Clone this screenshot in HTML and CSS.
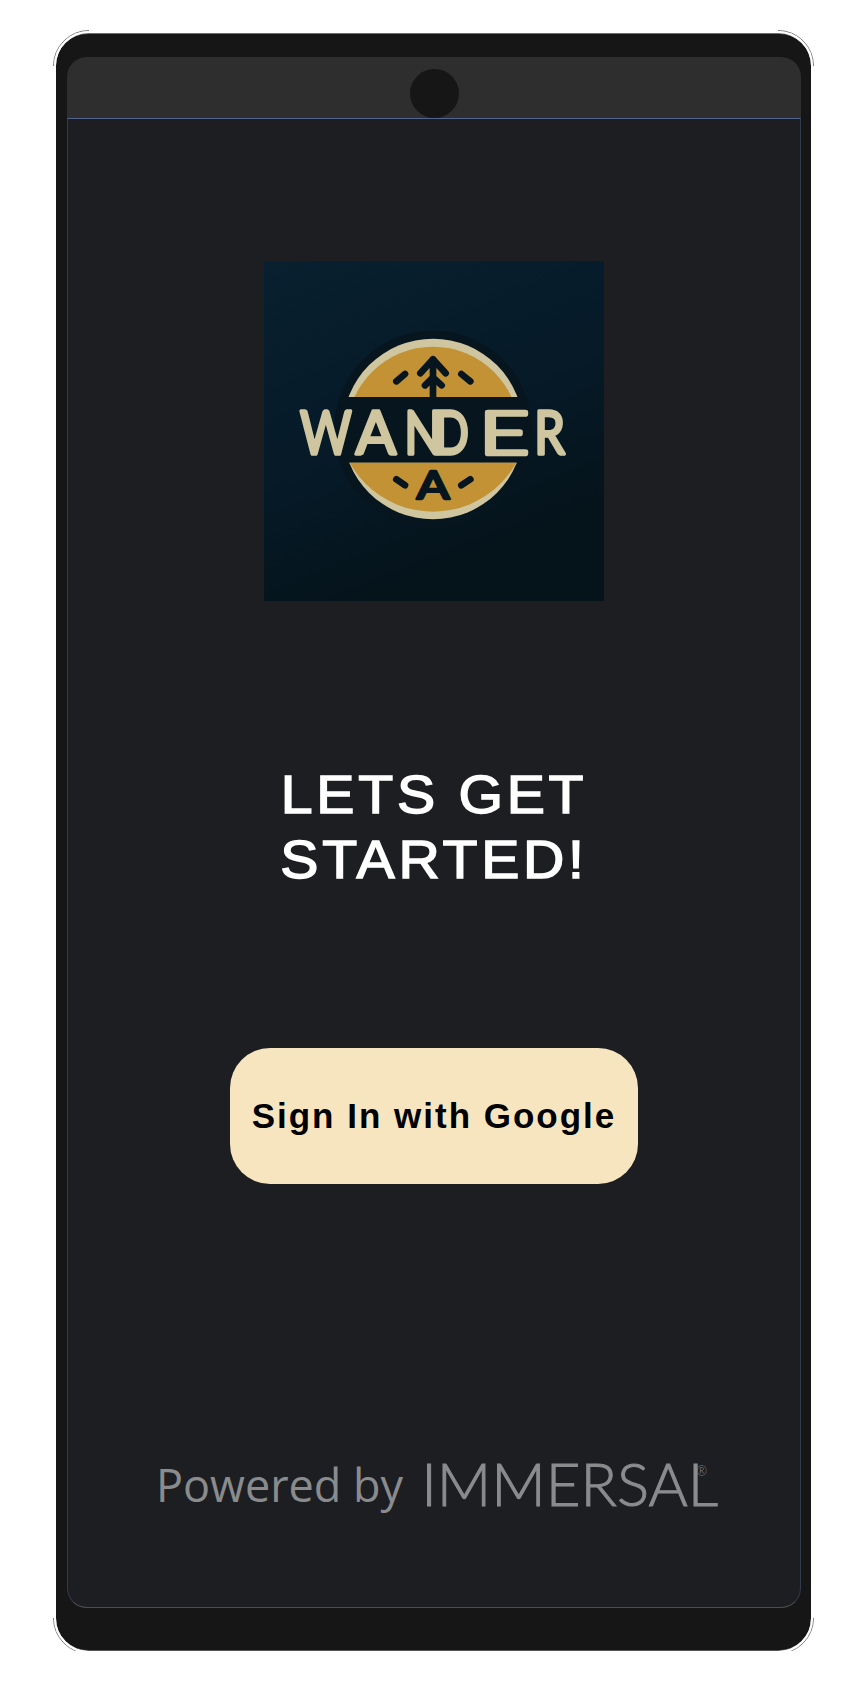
FILE: index.html
```html
<!DOCTYPE html>
<html lang="en">
<head>
  <meta charset="UTF-8" />
  <meta name="viewport" content="width=device-width, initial-scale=1.0"/>
  <title>Wander</title>
  <link rel="stylesheet" href="styles.css">
</head>
<body>

<div class="phone">
  <svg class="corner corner-tl" viewBox="0 0 36 36"><path class="arc-edge" d="M.5 36A35.500 35.500 0 0 1 36 .5"/><path class="arc-white" d="M2 36A34 34 0 0 1 36 2"/></svg>
  <svg class="corner corner-tr" viewBox="0 0 36 36"><path class="arc-edge" d="M.5 36A35.500 35.500 0 0 1 36 .5"/><path class="arc-white" d="M2 36A34 34 0 0 1 36 2"/></svg>
  <svg class="corner corner-bl" viewBox="0 0 36 36"><path class="arc-edge" d="M.5 36A35.500 35.500 0 0 1 36 .5"/><path class="arc-white" d="M2 36A34 34 0 0 1 36 2"/></svg>
  <svg class="corner corner-br" viewBox="0 0 36 36"><path class="arc-edge" d="M.5 36A35.500 35.500 0 0 1 36 .5"/><path class="arc-white" d="M2 36A34 34 0 0 1 36 2"/></svg>

  <div class="notch"><div class="camera"></div></div>

  <div class="screen">
    <svg class="logo" viewBox="27 33 1020 1020">
      <defs>
        <linearGradient id="logoBg" x1="0" y1="0" x2="0.4" y2="1">
          <stop offset="0" stop-color="#08202f"/>
          <stop offset="0.55" stop-color="#061a28"/>
          <stop offset="1" stop-color="#05131a"/>
        </linearGradient>
        <clipPath id="topCut"><rect x="200" y="200" width="680" height="241"/></clipPath>
        <clipPath id="bottomCut"><rect x="200" y="638" width="680" height="240"/></clipPath>
      </defs>
      <rect x="27" y="33" width="1020" height="1020" fill="url(#logoBg)"/>
      <circle cx="534" cy="538" r="296" fill="#06151e"/>

      <g clip-path="url(#topCut)">
        <circle cx="534" cy="537" r="271" fill="#cfc6a0"/>
        <circle cx="534" cy="549" r="259" fill="#c29234"/>
      </g>
      <g clip-path="url(#bottomCut)">
        <circle cx="534" cy="537" r="271" fill="#cfc6a0"/>
        <circle cx="534" cy="499" r="286" fill="#c29234"/>
      </g>

      <g class="logo-marks">
        <path d="M534 440V328M496 370L534 328L572 370M510 406L534 382L560 406"/>
        <path d="M424 394L450 372M619 372L646 394M424 688L450 706M619 706L646 688"/>
      </g>
      <text class="logo-a" x="485" y="746" textLength="98" lengthAdjust="spacingAndGlyphs">A</text>
      <g class="logo-word"><text x="135" y="612" textLength="155" lengthAdjust="spacingAndGlyphs">W</text><text x="302" y="612" textLength="121" lengthAdjust="spacingAndGlyphs">A</text><text x="448" y="612" textLength="114" lengthAdjust="spacingAndGlyphs">N</text><text x="538" y="612" textLength="104" lengthAdjust="spacingAndGlyphs">D</text><text class="logo-wide" x="673" y="612" textLength="150" lengthAdjust="spacingAndGlyphs">E</text><text x="838" y="612" textLength="92" lengthAdjust="spacingAndGlyphs">R</text></g>
    </svg>

    <h1 class="title">LETS GET<br>STARTED!</h1>

    <button class="signin" type="button">Sign In with Google</button>

    <div class="powered">
      <span class="powered-text">Powered by</span>
      <span class="brand">IMMERSAL<sup class="reg">®</sup></span>
    </div>
  </div>
</div>

</body>
</html>
```

FILE: styles.css
```css
body {
  margin: 0;
  background: white;
  font-family: "Liberation Sans", Arial, sans-serif;
}
.phone {
  position: relative;
  box-sizing: border-box;
  width: 755px;
  height: 1618px;
  margin: 33px 0 0 56px;
  padding: 23px 10px 42px 11px;
  display: flex;
  flex-direction: column;
  background: #161616;
  border-radius: 32px;
  border-top: 1px solid #6d6d6d;
  border-bottom: 1px solid #555;
}
.corner {
  position: absolute;
  width: 36px;
  height: 36px;
  fill: none;
}
.corner-tl { left: -3px; top: -4px; }
.corner-tr { right: -3px; top: -4px; transform: scaleX(-1); }
.corner-bl { left: -3px; bottom: -4px; transform: scaleY(-1); }
.corner-br { right: -3px; bottom: -4px; transform: scale(-1, -1); }
.arc-edge {
  stroke: #777;
  stroke-width: 1;
}
.arc-white {
  stroke: white;
  stroke-width: 2;
}
.notch {
  flex: none;
  height: 61px;
  display: flex;
  justify-content: center;
  background: #2e2e2e;
  border-radius: 20px 20px 0 0;
}
.camera {
  width: 49px;
  height: 49px;
  margin-top: 12px;
  background: #161616;
  border-radius: 50%;
}
.screen {
  flex: 1;
  display: flex;
  flex-direction: column;
  align-items: center;
  background: #1d1e22;
  border: 1px solid #333a4c;
  border-top-color: #50648f;
  border-bottom-color: #4d4d4d;
  border-radius: 0 0 20px 20px;
}
.logo {
  width: 340px;
  height: 340px;
  margin-top: 142px;
  flex: none;
}
.logo-marks {
  fill: none;
  stroke: #06151e;
  stroke-width: 20;
  stroke-linecap: round;
  stroke-linejoin: round;
}
.logo-a {
  font-family: Lato, sans-serif;
  font-size: 114px;
  font-weight: 400;
  fill: #06151e;
  stroke: #06151e;
  stroke-width: 8;
  stroke-linejoin: round;
}
.logo-word {
  font-family: Lato, sans-serif;
  font-size: 179px;
  font-weight: 400;
  fill: #cfc6a0;
  stroke: #cfc6a0;
  stroke-width: 10;
  stroke-linejoin: round;
}
.logo-wide {
  font-weight: 300;
  stroke-width: 14;
}
.title {
  margin: 161px 0 0;
  color: white;
  font-size: 54px;
  font-weight: 400;
  line-height: 65px;
  letter-spacing: 3.5px;
  text-align: center;
  transform: scaleX(1.06);
  -webkit-text-stroke: 1.5px white;
}
.signin {
  width: 408px;
  height: 136px;
  margin-top: 156px;
  padding: 0;
  background: #f7e5c0;
  color: black;
  border: none;
  border-radius: 40px;
  font-family: "Liberation Sans", Arial, sans-serif;
  font-size: 35px;
  font-weight: 700;
  letter-spacing: 2px;
}
.powered {
  margin: 269px 0 0 -5px;
  display: flex;
  align-items: flex-start;
  gap: 18px;
  color: #8a8b8d;
}
.powered-text {
  padding-top: 2px;
  font-family: "Open Sans", sans-serif;
  font-size: 45px;
  font-weight: 400;
  line-height: 60px;
}
.brand {
  font-family: Lato, sans-serif;
  font-size: 60px;
  font-weight: 300;
  line-height: 60px;
  -webkit-text-stroke: 1px #8a8b8d;
}
.reg {
  font-size: 13px;
  line-height: 0;
  margin-left: -22px;
  vertical-align: 30px;
  -webkit-text-stroke: 0;
}
```
